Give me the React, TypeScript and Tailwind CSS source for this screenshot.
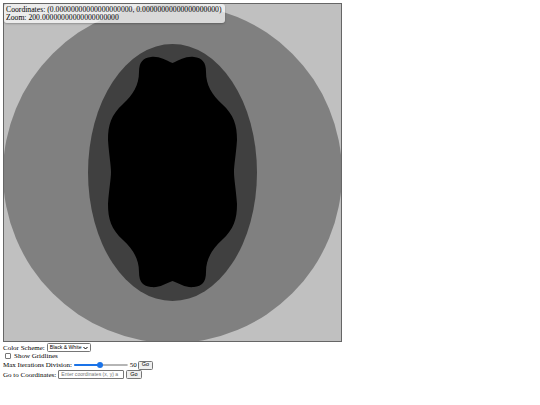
const blob =
  'M172.5 63 C180 60 186 56 194 57 C202 58 206 62 206 72 C206 85 212 95 222 104 C234 115 237 125 237 140 C236 155 234 165 234 172 C234 179 236 189 237 204 C237 219 234 229 222 240 C212 249 206 259 206 272 C206 282 202 286 194 287 C186 288 180 284 172.5 281 C165 284 159 288 151 287 C143 286 139 282 139 272 C139 259 133 249 123 240 C111 229 108 219 108 204 C109 189 111 179 111 172 C111 165 109 155 108 140 C108 125 111 115 123 104 C133 95 139 85 139 72 C139 62 143 58 151 57 C159 56 165 60 172.5 63 Z'

function Fractal() {
  return (
    <svg width="337" height="337" viewBox="4 4 337 337" className="block">
      <rect x="0" y="0" width="345" height="345" fill="#c0c0c0" />
      <circle cx="172.5" cy="173.5" r="169.5" fill="#808080" />
      <ellipse cx="172.5" cy="172.5" rx="84.5" ry="128.5" fill="#404040" />
      <path d={blob} fill="#000" />
    </svg>
  )
}

function Btn() {
  return (
    <span className="inline-flex items-center justify-center h-[9px] px-[3px] bg-[#efefef] border border-[#767676] rounded-[1.5px] text-[5.5px] leading-none font-['Liberation_Sans',sans-serif] text-black">
      Go
    </span>
  )
}

export default function App() {
  const zeros = '0.' + '0'.repeat(20)
  return (
    <div className="p-[3px] font-['Liberation_Serif',serif] text-black text-[7px] leading-[8px] bg-white min-h-[405px]">
      <div className="relative w-[339px] h-[339px] border border-[#666]">
        <Fractal />
        <div className="absolute left-0 top-0 w-[221px] h-[19px] px-[2px] pt-[2px] bg-white/70 rounded-[3px] shadow-[0_1px_2px_rgba(0,0,0,0.25)] text-[7.7px] leading-[7.5px] whitespace-nowrap">
          <div>Coordinates: ({zeros}, {zeros})</div>
          <div>Zoom: 200.{'0'.repeat(20)}</div>
        </div>
      </div>

      <div className="flex items-center h-[9px] mt-[1px]">
        <span>Color Scheme:</span>
        <span className="ml-[2px] inline-flex items-center h-[9px] px-[2px] gap-[1.5px] border border-[#767676] rounded-[1.5px] bg-white text-[5.1px] leading-none font-['Liberation_Sans',sans-serif]">
          Black &amp; White
          <svg width="5" height="4" viewBox="0 0 10 8">
            <path d="M1 2 L5 6 L9 2" stroke="#000" strokeWidth="2" fill="none" />
          </svg>
        </span>
      </div>

      <div className="flex items-center h-[8px]">
        <span className="ml-[2px] w-[6px] h-[6px] border border-[#767676] rounded-[1px] bg-white" />
        <span className="ml-[3px]">Show Gridlines</span>
      </div>

      <div className="flex items-center h-[10px]">
        <span>Max Iterations Division:</span>
        <span className="relative ml-[2px] w-[54px] h-[6px] flex items-center">
          <span className="w-full h-[2px] rounded-full bg-[#efefef] border-[0.5px] border-[#b5b5b5]" />
          <span className="absolute left-0 w-[26px] h-[2px] rounded-full bg-[#1a73e8]" />
          <span className="absolute left-[23px] w-[6px] h-[6px] rounded-full bg-[#1a73e8]" />
        </span>
        <span className="ml-[2px] mr-[1px]">50</span>
        <Btn />
      </div>

      <div className="flex items-center h-[9px]">
        <span>Go to Coordinates:</span>
        <span className="ml-[2px] w-[66px] h-[9px] px-[2px] flex items-center border border-[#767676] rounded-[1px] bg-white text-[5.1px] leading-none text-[#757575] font-['Liberation_Sans',sans-serif] overflow-hidden whitespace-nowrap">
          Enter coordinates (x, y) a
        </span>
        <span className="ml-[2px]">
          <Btn />
        </span>
      </div>
    </div>
  )
}
